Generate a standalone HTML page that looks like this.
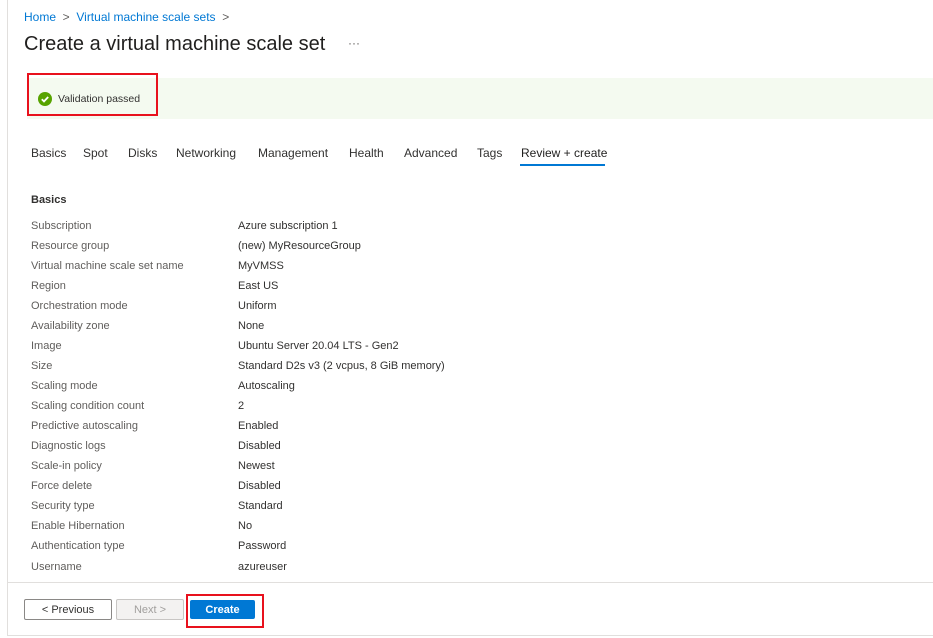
<!DOCTYPE html><html><head><style>
body{margin:0;width:933px;height:638px;background:#fff;font-family:"Liberation Sans",sans-serif;position:relative;overflow:hidden;color:#323130}
.a{position:absolute;white-space:nowrap}
.r{font-size:11px;color:#605e5c}
.v{font-size:11px;color:#323130}
.t{top:146px;font-size:12px;color:#323130}
.b{display:flex;align-items:center;justify-content:center;box-sizing:border-box;font-size:11px;border-radius:2px}
</style></head><body>
<div class="a" style="left:7px;top:0;width:1px;height:636px;background:#e1dfdd"></div>
<div class="a" style="left:7px;top:635px;width:926px;height:1px;background:#e1dfdd"></div>
<div class="a" style="left:24px;top:10px;font-size:12px;color:#0078d4">Home<span style="color:#605e5c"> &nbsp;&gt;&nbsp; </span>Virtual machine scale sets<span style="color:#605e5c"> &nbsp;&gt;</span></div>
<div class="a" style="left:24px;top:33px;font-size:20px;color:#201f1e">Create a virtual machine scale set</div>
<div class="a" style="left:348px;top:36px;font-size:12px;color:#605e5c">···</div>
<div class="a" style="left:27px;top:78px;width:906px;height:41px;background:#f4faf0"></div>
<div class="a" style="left:27px;top:73px;width:127px;height:39px;border:2px solid #e8111d"></div>
<svg class="a" style="left:38px;top:92px" width="14" height="14" viewBox="0 0 14 14"><circle cx="7" cy="7" r="7" fill="#57a300"/><path d="M3.8 7.2l2.2 2.2 4.2-4.4" stroke="#fff" stroke-width="1.8" fill="none"/></svg>
<div class="a" style="left:58px;top:93px;font-size:10.5px;color:#323130">Validation passed</div>
<div class="a t" style="left:31px">Basics</div>
<div class="a t" style="left:83px">Spot</div>
<div class="a t" style="left:128px">Disks</div>
<div class="a t" style="left:176px">Networking</div>
<div class="a t" style="left:258px">Management</div>
<div class="a t" style="left:349px">Health</div>
<div class="a t" style="left:404px">Advanced</div>
<div class="a t" style="left:477px">Tags</div>
<div class="a t" style="left:521px;color:#201f1e">Review + create</div>
<div class="a" style="left:520px;top:164px;width:85px;height:2px;background:#0078d4"></div>
<div class="a" style="left:31px;top:194px;font-size:11px;font-weight:bold;color:#323130">Basics</div>
<div id="rows"></div>
<div class="a" style="left:7px;top:582px;width:926px;height:1px;background:#e1dfdd"></div>
<div class="a b" style="left:24px;top:599px;width:88px;height:21px;border:1px solid #8a8886">&lt; Previous</div>
<div class="a b" style="left:116px;top:599px;width:68px;height:21px;border:1px solid #c8c6c4;background:#f3f2f1;color:#a19f9d">Next &gt;</div>
<div class="a b" style="left:190px;top:600px;width:65px;height:19px;background:#0078d4;color:#fff;font-weight:bold">Create</div>
<div class="a" style="left:186px;top:594px;width:74px;height:30px;border:2px solid #e8111d"></div>
<script>
var d=[["Subscription","Azure subscription 1"],["Resource group","(new) MyResourceGroup"],["Virtual machine scale set name","MyVMSS"],["Region","East US"],["Orchestration mode","Uniform"],["Availability zone","None"],["Image","Ubuntu Server 20.04 LTS - Gen2"],["Size","Standard D2s v3 (2 vcpus, 8 GiB memory)"],["Scaling mode","Autoscaling"],["Scaling condition count","2"],["Predictive autoscaling","Enabled"],["Diagnostic logs","Disabled"],["Scale-in policy","Newest"],["Force delete","Disabled"],["Security type","Standard"],["Enable Hibernation","No"],["Authentication type","Password"],["Username","azureuser"]];
var h="";d.forEach(function(r,i){var t=219.5+i*20.06;h+='<div class="a r" style="left:31px;top:'+t+'px">'+r[0]+'</div><div class="a v" style="left:238px;top:'+t+'px">'+r[1]+'</div>';});
document.getElementById("rows").outerHTML=h;
</script>
</body></html>
